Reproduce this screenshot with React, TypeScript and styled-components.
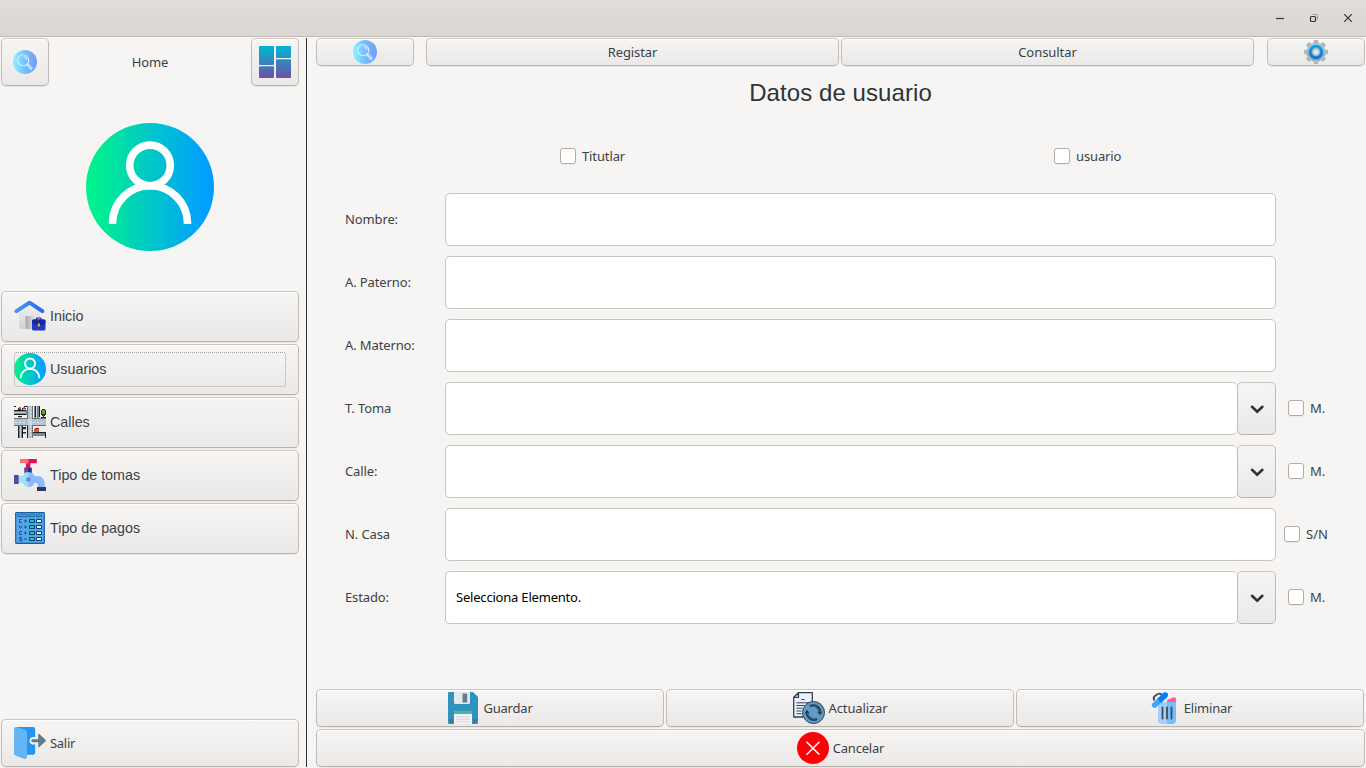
import React from "react";
import styled, { createGlobalStyle, css } from "styled-components";

const Global = createGlobalStyle`
  * { box-sizing: border-box; }
  html, body { margin: 0; padding: 0; }
  body {
    background: #f6f5f4;
    color: #3b4245;
    font-family: "Noto Sans", "Open Sans", sans-serif;
    font-size: 13px;
    line-height: 18px;
    overflow: hidden;
  }
`;

const Window = styled.div`
  display: flex;
  flex-direction: column;
  width: 1366px;
  height: 768px;
`;

const TitleBar = styled.header`
  display: flex;
  align-items: center;
  justify-content: flex-end;
  gap: 18px;
  height: 37px;
  padding-right: 10px;
  background: linear-gradient(#e1dedb, #dad6d2);
  border-bottom: 1px solid #bfb8b1;
`;

const Body = styled.div`
  display: flex;
  flex: 1;
  padding: 0 1px 1px;
  border-top: 1px solid #f9f8f7;
`;

const Sidebar = styled.aside`
  display: flex;
  flex-direction: column;
  width: 298px;
`;

const Divider = styled.div`
  width: 1px;
  margin: 0 9px 0 7px;
  background: #2e3436;
`;

const Main = styled.main`
  display: flex;
  flex-direction: column;
  flex: 1;
`;

const raised = css`
  border: 1px solid #cdc7c2;
  border-color: #cac5bf #c2bcb6 #b8b1aa #c2bcb6;
  border-radius: 5px;
  background: linear-gradient(#f6f5f3, #ebe9e8);
  box-shadow: inset 0 1px #fff, 0 1px 1px rgba(0, 0, 0, 0.06);
`;

const Button = styled.button<{ $w?: number; $h: number }>`
  ${raised}
  display: flex;
  align-items: center;
  justify-content: center;
  gap: 4px;
  ${(p) => (p.$w ? `width: ${p.$w}px;` : "flex: 1;")}
  height: ${(p) => p.$h}px;
  padding: 0;
  color: inherit;
  font: inherit;
`;

const Text = styled.span<{ $track?: number; $color?: string }>`
  letter-spacing: ${(p) => p.$track ?? -0.12}px;
  color: ${(p) => p.$color ?? "inherit"};
  white-space: nowrap;
`;

const SideHeader = styled.div`
  display: flex;
  align-items: center;
  justify-content: space-between;
  height: 48px;
`;

const Avatar = styled.div`
  display: flex;
  justify-content: center;
  height: 205px;
  padding-top: 37px;
`;

const Menu = styled.nav`
  display: flex;
  flex-direction: column;
  gap: 2px;
`;

const MenuButton = styled.button<{ $h?: number; $sans?: boolean }>`
  ${raised}
  display: flex;
  width: 298px;
  height: ${(p) => p.$h ?? 51}px;
  padding: 7px 12px;
  color: inherit;
  font: inherit;
  ${(p) => p.$sans && `font-family: "Liberation Sans", Arial, sans-serif; font-size: 14.3px;`}
`;

const MenuContent = styled.span<{ $focus?: boolean; $pad?: boolean }>`
  display: flex;
  flex: 1;
  align-self: stretch;
  align-items: center;
  gap: 4px;
  padding: ${(p) => (p.$pad ? "1px 0 2px" : "0")};
  outline: ${(p) => (p.$focus ? "1px dotted #a5a3a1" : "none")};
  outline-offset: -1px;
  border-radius: 2px;
`;

const Spacer = styled.div`
  flex: 1;
`;

const Toolbar = styled.div`
  display: flex;
  height: 28px;
`;

const Tabs = styled.div`
  display: flex;
  gap: 2px;
  width: 828px;
  margin: 0 13px 0 12px;
`;

const Heading = styled.h1`
  height: 28px;
  margin: 13px 0 0;
  font: 400 24px/28px "Liberation Sans", Arial, sans-serif;
  letter-spacing: 0.08px;
  color: #2e3436;
  text-align: center;
`;

const RoleRow = styled.div`
  display: grid;
  grid-template-columns: 494px 1fr;
  margin-top: 41px;
  padding-left: 244px;
  height: 16px;
`;

const CheckLabel = styled.label`
  display: flex;
  align-items: center;
  gap: 6px;
  height: 16px;
`;

const Box = styled.span`
  width: 16px;
  height: 16px;
  border: 1px solid #b3aba4;
  border-radius: 3px;
  background: #fff;
  box-shadow: 0 1px 1px rgba(0, 0, 0, 0.05);
`;

const Form = styled.form`
  display: flex;
  flex-direction: column;
  gap: 10px;
  margin-top: 29px;
  padding-left: 29px;
`;

const Row = styled.div`
  display: grid;
  grid-template-columns: 100px 831px 1fr;
  align-items: center;
  height: 53px;
`;

const RowLabel = styled.label`
  padding-bottom: 2px;
`;

const Extra = styled.div<{ $gap: number }>`
  padding: 0 0 1px ${(p) => p.$gap}px;
`;

const Field = styled.div`
  display: flex;
  height: 53px;
`;

const Entry = styled.div<{ $joined?: boolean }>`
  display: flex;
  flex: 1;
  align-items: center;
  padding: 0 0 2px 10px;
  border: 1px solid #c9c4be;
  border-radius: 5px;
  background: #fff;
  ${(p) => p.$joined && "border-right: 0;"}
`;

const Arrow = styled.div`
  ${raised}
  display: flex;
  align-items: center;
  justify-content: center;
  width: 39px;
  box-shadow: none;
`;

const Actions = styled.div<{ $last?: boolean }>`
  display: flex;
  gap: 2px;
  margin-bottom: ${(p) => (p.$last ? 0 : 2)}px;
  padding-right: ${(p) => (p.$last ? 0 : 1)}px;
`;

const SearchIcon = ({ id }: { id: string }) => (
  <svg width="24" height="24" viewBox="0 0 24 24">
    <defs>
      <linearGradient id={id}>
        <stop offset="0" stopColor="#8af3ff" />
        <stop offset=".5" stopColor="#79bdfd" />
        <stop offset="1" stopColor="#6f9cfb" />
      </linearGradient>
    </defs>
    <circle cx="12" cy="12" r="12" fill={`url(#${id})`} />
    <g fill="none" stroke="#d9efff" strokeWidth="1.1">
      <circle cx="10.2" cy="10.2" r="5.500" />
      <path d="M10.500 6.700a3.600 3.600 0 0 1 3.200 3.200M14.100 14.200l.9.900M15.100 14.200l3.700 3.600q.5.700-.1 1.200-.6.500-1.200 0l-3.400-3.700z" />
    </g>
  </svg>
);

const DashboardIcon = () => (
  <svg width="32" height="32" viewBox="0 0 32 32">
    <defs>
      <linearGradient id="dash" gradientUnits="userSpaceOnUse" x1="0" y1="0" x2="0" y2="32">
        <stop offset=".1" stopColor="#06afd2" />
        <stop offset="1" stopColor="#7050a2" />
      </linearGradient>
    </defs>
    <g fill="url(#dash)">
      <rect width="15" height="19" rx="1" />
      <rect y="20.2" width="15" height="11.8" rx="1" />
      <rect x="17" width="15" height="12" rx="1" />
      <rect x="17" y="13.2" width="15" height="18.8" rx="1" />
    </g>
  </svg>
);

const UserIcon = ({ size, id }: { size: number; id: string }) => (
  <svg width={size} height={size} viewBox="0 0 128 128">
    <defs>
      <linearGradient id={id}>
        <stop offset="0" stopColor="#00f58c" />
        <stop offset=".08" stopColor="#00f090" />
        <stop offset=".93" stopColor="#009fff" />
        <stop offset="1" stopColor="#009dff" />
      </linearGradient>
    </defs>
    <circle cx="64" cy="64" r="64" fill={`url(#${id})`} />
    <g fill="none" stroke="#fff" strokeWidth="7.6">
      <circle cx="64" cy="42.4" r="20.3" />
      <path d="M26.500 101v-.7a37.500 37.500 0 0 1 75 0v.7" />
    </g>
  </svg>
);

const HomeIcon = () => (
  <svg width="32" height="32" viewBox="0 0 32 32">
    <defs>
      <linearGradient id="wall" x2="0" y2="1"><stop stopColor="#f0f1f2" /><stop offset="1" stopColor="#cfd2d4" /></linearGradient>
      <linearGradient id="door"><stop stopColor="#a4a9ac" /><stop offset="1" stopColor="#d4d7d9" /></linearGradient>
      <linearGradient id="roof"><stop stopColor="#4b91f2" /><stop offset="1" stopColor="#276ceb" /></linearGradient>
    </defs>
    <path d="M5 13 15.500 5 26 13v12q0 4-4 4H9q-4 0-4-4z" fill="url(#wall)" />
    <path d="M11.500 16H19v13h-7.500z" fill="url(#door)" />
    <path d="M2.500 11.200 15.500 2.700l12.800 8.500" fill="none" stroke="url(#roof)" strokeWidth="4" strokeLinecap="round" strokeLinejoin="round" />
    <path d="M22.500 20v-1.200q0-.8.800-.8h3q.8 0 .8.800V20" fill="none" stroke="#172a9b" strokeWidth="1.200" />
    <rect x="18" y="19.500" width="13.500" height="11" rx="1.500" fill="#1f3cc4" />
    <path d="M18 21q0-1.500 1.500-1.500H30q1.500 0 1.500 1.500v2q-2 2.200-6.700 2.200T18 23z" fill="#172a9b" />
    <path d="M23.900 23.500h1.900v2.600l-.95 1-.95-1z" fill="#ffb52b" />
  </svg>
);

const StreetsIcon = () => (
  <svg width="32" height="32" viewBox="0 0 32 32" shapeRendering="crispEdges">
    <path d="M0 12h32v8H0zM13 0h6v32h-6z" fill="#667178" />
    <path d="M0 13h32v6H0zM14 0h4v32h-4z" fill="#b5c3cc" />
    <path d="M14 13h4v6h-4z" fill="#c9d9e3" />
    <path d="M1 16h12M19 16h12M16 1v11M16 20v12" stroke="#dbe6ed" strokeWidth="1" strokeDasharray="2 2" />
    <path d="M0 4h13v5H0zM20 0h5v12h-5zM4 20h5v12H4zM19 27h13v3H19z" fill="#7c888f" />
    <path d="M0 6h12v1H0zM22 0h1v12h-1zM6 20h1v12H6z" fill="#ccd6dc" />
    <path d="M0 4h12v1H0zM0 8h12v1H0zM21 0h1v11h-1zM25 0h1v11h-1zM4 20h1v12H4zM8 20h1v12H8zM19 26h13v1H19zM31 26h1v6h-1zM13 20h1v12h-1z" fill="#1c2125" />
    <path d="M0 0h2v1H0zM27 11h5v1h-5zM10 0h3v1h-3z" fill="#1c2125" />
    <path d="M4 2h3v2H4zM8 2h4v2H8zM4 10h4v1H4zM9 21h3v2H9zM9 26h3v1H9z" fill="#2a2426" />
    <path d="M5 1h2v2H5zM9 1h2v2H9z" fill="#bd5a4d" />
    <path d="M9 3h3v1H9z" fill="#cfc27a" />
    <path d="M4 11h4v1H4zM9 23h3v1H9z" fill="#dca9bd" />
    <path d="M9 27h3v1H9z" fill="#20bed4" />
    <path d="M21 22h4v1h-4z" fill="#7d2a18" />
    <path d="M20 23h5v3h-5z" fill="#e6532b" />
    <path d="M27 4h5v5h-5zM28 3h3v7h-3z" fill="#223015" />
    <path d="M28 4h3v4h-3z" fill="#5fa52a" />
    <path d="M29 8h1v4h-1z" fill="#3d2d21" />
  </svg>
);

const TapIcon = () => (
  <svg width="32" height="32" viewBox="0 0 32 32">
    <path d="M6 0h8.500v4.200H6z" fill="#ff6b6f" />
    <path d="M14.300 0H22.800v4.200h-6.500V9H12V4.200h2.300z" fill="#e80b58" />
    <path d="M10.500 8.700h7.300v5.500h-7.300z" fill="#333168" />
    <path d="M10.500 8.700h3.800v5.500h-3.800z" fill="#544c98" />
    <path d="M4.500 17h4l3-3.800h3V28q-4 0-6-4.200h-4z" fill="#9ce0f8" />
    <path d="M14.300 13q4.500 0 6.300 4h2.200q8 0 8 9v2.300h-7V26q0-2.300-2.200-2.300h-1Q18.700 28 14.300 28z" fill="#8abafc" />
    <circle cx="14.300" cy="20.400" r="2.200" fill="#7c78d9" />
    <path d="M0 16h4.700v9H0z" fill="#544c98" />
    <path d="M23 28h9v4h-9z" fill="#333168" />
  </svg>
);

const PaymentsIcon = () => (
  <svg width="32" height="32" viewBox="0 0 32 32">
    <rect x="1.700" y=".6" width="28.600" height="30.800" rx=".7" fill="#54a6e7" stroke="#155e9f" strokeWidth="1.200" />
    <g fill="#73b9ee" stroke="#155e9f" strokeWidth=".9">
      <path d="M4 2.800h10v1.800H4zM15.500 2.800h5v1.800h-5zM22.500 2.800h5v1.800h-5z" />
    </g>
    <g stroke="#103d70" strokeWidth="1" fill="#0fcfb2">
      <path d="M15.500 7.500h5v3h-5zM15.500 13.500h5v3h-5zM15.500 19.500h5v3h-5zM15.500 25.500h5v3h-5z" />
      <path fill="#dff2ff" d="M22.500 7.500h5v3h-5zM22.500 13.500h5v3h-5zM22.500 19.500h5v3h-5zM22.500 25.500h5v3h-5z" />
    </g>
    <g fill="none" stroke="#17589a" strokeWidth="1">
      <path d="M8 7.500H5.500v3H8M5 13.500l1.500 3 1.500-3M8 19.500H5.500v3H8M8 25.300H5.500V27H8v1.800H5.300M10 9h3M11.500 7.500v3M10 15h3M11.500 13.500v3M10 21h3M11.500 19.500v3M10 27h3" />
    </g>
  </svg>
);

const ExitIcon = () => (
  <svg width="32" height="32" viewBox="0 0 32 32">
    <path d="M2.500 0H19q2.200 0 2.200 2.200v7.900h-2.500a3.800 3.800 0 0 0 0 7.500h2.500v8q0 2.200-2.200 2.200H2z" fill="#2196f3" />
    <path d="M2.200 0 11 2.800q2 .7 2 2.500v24.500q0 2.800-2.700 2L1.800 28.700Q0 28 0 26.200V2.200Q0 0 2.200 0z" fill="#64b5f6" />
    <path d="M18.700 12.300h5.500V7.600q0-1.500 1.200-.5l6 5.600q.9.900 0 1.800l-6 5.600q-1.200 1-1.200-.5v-4.400h-5.500q-1.400 0-1.400-1.400t1.400-1.500z" fill="#607d8b" />
  </svg>
);

const GearIcon = () => (
  <svg width="24" height="24" viewBox="0 0 24 24">
    <defs>
      <linearGradient id="gear" x2="0" y2="1"><stop stopColor="#bfcecf" /><stop offset="1" stopColor="#86999d" /></linearGradient>
      <linearGradient id="ring" x2="0" y2="1"><stop stopColor="#00a4f5" /><stop offset="1" stopColor="#0872ed" /></linearGradient>
    </defs>
    <g fill="url(#gear)">
      <circle cx="12" cy="12" r="9.500" />
      {[0, 45, 90, 135, 180, 225, 270, 315].map((a) => (
        <path key={a} fill="#a9babc" d="M9.200 4 9.800.8q.1-.8.800-.8h2.800q.7 0 .8.800l.6 3.200z" transform={`rotate(${a} 12 12)`} />
      ))}
    </g>
    <circle cx="12" cy="12" r="3.500" fill="#e7e9e8" stroke="#a9b8ba" strokeWidth="2" />
    <circle cx="12" cy="12" r="5.800" fill="none" stroke="url(#ring)" strokeWidth="2.800" />
  </svg>
);

const SaveIcon = () => (
  <svg width="32" height="32" viewBox="0 0 32 32">
    <path d="M1 1q0-1 1-1h24l5 5v26q0 1-1 1H2q-1 0-1-1z" fill="#2f93bd" />
    <path d="M7 0h16v10.500q0 1.500-1.500 1.500h-13Q7 12 7 10.500z" fill="#e3e9ed" />
    <path d="M15.500 1.500h4.700v9h-4.700z" fill="#647d90" />
    <path d="M7 32V20q0-1 1-1h16q1 0 1 1v12z" fill="#f1f3f5" />
    <path d="M7 22v-2q0-1 1-1h16q1 0 1 1v2z" fill="#4bb898" />
    <path d="M9 24.800h14M9 27.300h14M9 29.800h14" stroke="#cdd4da" strokeWidth=".9" />
    <path d="M2.700 27h3.200v3.500H2.700zM26.200 27h3.200v3.500h-3.200z" fill="#526d80" />
  </svg>
);

const UpdateIcon = () => (
  <svg width="32" height="32" viewBox="0 0 32 32">
    <path d="M5.500.700h13.800V25H.700V5.500z" fill="#e8f2ff" stroke="#33414b" strokeWidth="1.300" strokeLinejoin="round" />
    <path d="M5.500.700v4.800H.7z" fill="#b6c6d5" stroke="#33414b" strokeWidth="1.200" strokeLinejoin="round" />
    <path d="M8.500 7.500h3M3.500 10.800H16M3.500 13.500h8M3.500 16.200h6M3.500 19h5M3.500 21.700h5" stroke="#33414b" strokeWidth="1" />
    <circle cx="20.500" cy="20.500" r="11" fill="#5e9bc9" stroke="#2b4356" strokeWidth="1" />
    <g fill="none" stroke="#263947" strokeWidth="2.600">
      <path d="M17 14.200a7 7 0 0 1 10 5.800M24 26.800a7 7 0 0 1-10-5.800" />
    </g>
    <path d="M24.500 19.800h5L27 23.200zM11.500 21.200h5L14 17.800z" fill="#263947" />
    <path d="M17.500 14.400a6.700 6.700 0 0 1 9.100 5.400M23.500 26.600a6.700 6.700 0 0 1-9.100-5.400" fill="none" stroke="#527f9f" strokeWidth=".8" />
  </svg>
);

const TrashIcon = () => (
  <svg width="32" height="32" viewBox="0 0 32 32">
    <path d="M11 10h9v22h-6q-4 0-4-4V13q0-3 1-3z" fill="#9fd0ff" />
    <path d="M19 10h9v18q0 4-4 4h-5z" fill="#77bcfb" />
    <path d="M19 10v-2l6-2.500q3-.7 3 2V10z" fill="#ff5e91" />
    <path d="M6.200 8.500 5.700 5.800Q5.900 4.700 8.200 3q2.500-1.700 3.600-1.300L14 3" fill="none" stroke="#474f55" strokeWidth="2" strokeLinejoin="round" />
    <path d="m6.700 13 5.500-5.200" stroke="#43a5fc" strokeWidth="5.600" strokeLinecap="round" />
    <path d="m11.300 8.700 5.900-5.600" stroke="#007fff" strokeWidth="5.600" />
    <circle cx="17.200" cy="3.100" r="2.800" fill="#007fff" />
    <path d="M14.500 15.500v11M19 15.500v11M23.500 15.500v11" stroke="#414b54" strokeWidth="1.800" strokeLinecap="round" />
  </svg>
);

const CancelIcon = () => (
  <svg width="32" height="32" viewBox="0 0 32 32">
    <circle cx="16" cy="16" r="16" fill="#fe0006" />
    <path d="m10 10.200 12 12M22 10.200l-12 12" stroke="#fff" strokeWidth="1.500" strokeLinecap="round" />
  </svg>
);

const Chevron = () => (
  <svg width="16" height="16" viewBox="0 0 16 16">
    <path d="m3 5.800 5.200 4.900 5.200-4.900" fill="none" stroke="#2e3436" strokeWidth="2.600" strokeLinecap="round" />
  </svg>
);

const WindowIcon = ({ d, faint }: { d: string; faint?: string }) => (
  <svg width="16" height="16" viewBox="0 0 16 16" fill="none" stroke="#2e3436" strokeWidth="1.200">
    {faint && <path d={faint} stroke="#9b9997" strokeWidth="1" />}
    <path d={d} />
  </svg>
);

const Check = ({ label, track }: { label: string; track?: number }) => (
  <CheckLabel>
    <Box />
    <Text $track={track}>{label}</Text>
  </CheckLabel>
);

type FieldDef = { label: string; combo?: boolean; value?: string; check?: string; gap?: number };

const fields: FieldDef[] = [
  { label: "Nombre:" },
  { label: "A. Paterno:" },
  { label: "A. Materno:" },
  { label: "T. Toma", combo: true, check: "M.", gap: 12 },
  { label: "Calle:", combo: true, check: "M.", gap: 12 },
  { label: "N. Casa", check: "S/N", gap: 8 },
  { label: "Estado:", combo: true, value: "Selecciona Elemento.", check: "M.", gap: 12 },
];

const menu = [
  { label: "Inicio", icon: <HomeIcon /> },
  { label: "Usuarios", icon: <UserIcon size={32} id="userSmall" />, focus: true },
  { label: "Calles", icon: <StreetsIcon /> },
  { label: "Tipo de tomas", icon: <TapIcon /> },
  { label: "Tipo de pagos", icon: <PaymentsIcon /> },
];

export default function App() {
  return (
    <Window>
      <Global />
      <TitleBar>
        <WindowIcon d="M4 8.500h8" />
        <WindowIcon d="M5.500 6.500h3q1 0 1 1v3q0 1-1 1h-3q-1 0-1-1v-3q0-1 1-1z" faint="M6.500 4.500h4q1 0 1 1v4" />
        <WindowIcon d="m4.200 4.200 7.600 7.600M11.800 4.200l-7.600 7.600" />
      </TitleBar>
      <Body>
        <Sidebar>
          <SideHeader>
            <Button $w={48} $h={48}><SearchIcon id="searchSide" /></Button>
            <Text>Home</Text>
            <Button $w={48} $h={48}><DashboardIcon /></Button>
          </SideHeader>
          <Avatar><UserIcon size={128} id="userLarge" /></Avatar>
          <Menu>
            {menu.map((m) => (
              <MenuButton key={m.label} $sans>
                <MenuContent $focus={m.focus} $pad>{m.icon}<Text $track={0}>{m.label}</Text></MenuContent>
              </MenuButton>
            ))}
          </Menu>
          <Spacer />
          <MenuButton $h={48}>
            <MenuContent><ExitIcon /><Text $track={-0.3}>Salir</Text></MenuContent>
          </MenuButton>
        </Sidebar>
        <Divider />
        <Main>
          <Toolbar>
            <Button $w={98} $h={28}><SearchIcon id="searchMain" /></Button>
            <Tabs>
              <Button $h={28}><Text>Registar</Text></Button>
              <Button $h={28}><Text $track={-0.05}>Consultar</Text></Button>
            </Tabs>
            <Button $w={98} $h={28}><GearIcon /></Button>
          </Toolbar>
          <Heading>Datos de usuario</Heading>
          <RoleRow>
            <Check label="Titutlar" />
            <Check label="usuario" />
          </RoleRow>
          <Form>
            {fields.map((f) => (
              <Row key={f.label}>
                <RowLabel><Text>{f.label}</Text></RowLabel>
                <Field>
                  <Entry $joined={f.combo}>{f.value && <Text $track={-0.2} $color="#000">{f.value}</Text>}</Entry>
                  {f.combo && <Arrow><Chevron /></Arrow>}
                </Field>
                {f.check && <Extra $gap={f.gap ?? 12}><Check label={f.check} track={0} /></Extra>}
              </Row>
            ))}
          </Form>
          <Spacer />
          <Actions>
            <Button $h={38}><SaveIcon /><Text $track={-0.2}>Guardar</Text></Button>
            <Button $h={38}><UpdateIcon /><Text>Actualizar</Text></Button>
            <Button $h={38}><TrashIcon /><Text $track={-0.2}>Eliminar</Text></Button>
          </Actions>
          <Actions $last>
            <Button $h={38}><CancelIcon /><Text $track={-0.2}>Cancelar</Text></Button>
          </Actions>
        </Main>
      </Body>
    </Window>
  );
}
